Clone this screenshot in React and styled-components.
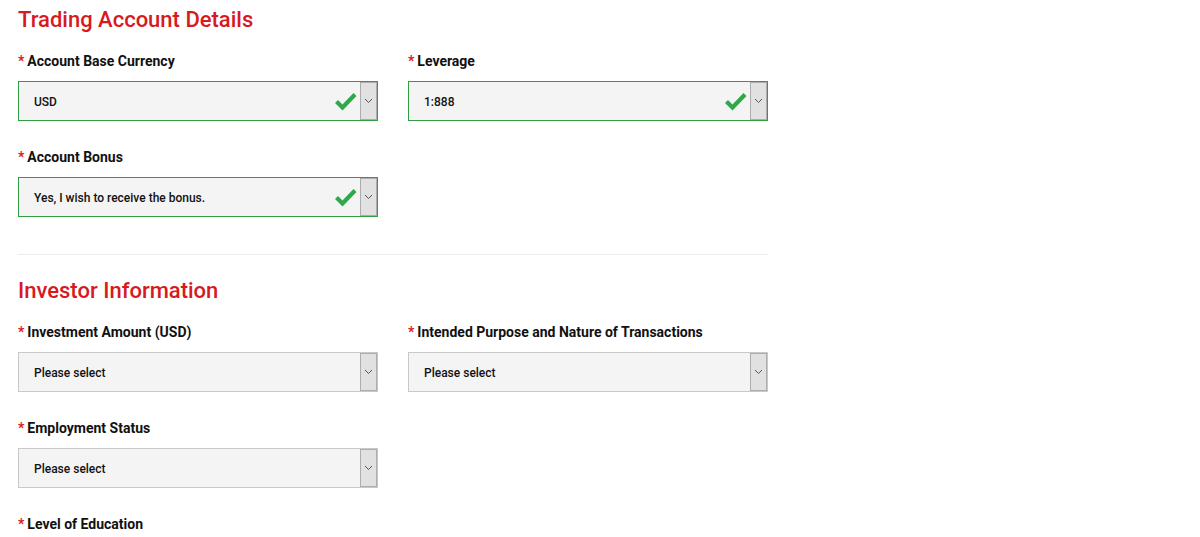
import React from 'react';
import styled, { createGlobalStyle } from 'styled-components';

const GlobalStyle = createGlobalStyle`
  body {
    margin: 0;
    background: #fff;
    font-family: Roboto, "Liberation Sans", Arial, sans-serif;
    color: #111;
  }
`;

const Page = styled.div`
  padding: 7px 18px 0;
  width: 750px;
`;

const Heading = styled.h2`
  margin: 0 0 18px;
  font-size: 22px;
  line-height: 26px;
  font-weight: 500;
  color: #d71a22;
`;

const Grid = styled.div`
  display: grid;
  grid-template-columns: 360px 360px;
  column-gap: 30px;
`;

const Field = styled.div`
  margin-bottom: 26px;
`;

const Label = styled.div`
  font-size: 14px;
  line-height: 20px;
  font-weight: 700;
  margin-bottom: 10px;
  color: #111;

  span {
    color: #d71a22;
    margin-right: 3px;
  }
`;

const Box = styled.div`
  display: flex;
  align-items: stretch;
  height: 40px;
  box-sizing: border-box;
  background: #f4f4f4;
  border: 1px solid ${(p) => (p.$valid ? '#2ea043' : '#c8c8c8')};
`;

const Value = styled.div`
  flex: 1;
  display: flex;
  align-items: center;
  padding: 2px 0 0 15px;
  font-size: 12px;
  font-weight: 500;
  color: #111;
`;

const Check = styled.svg`
  align-self: center;
  margin-right: 3px;
`;

const Arrow = styled.div`
  width: 17px;
  box-sizing: border-box;
  background: #e1e1e1;
  border: 1px solid #adadad;
  display: flex;
  align-items: center;
  justify-content: center;
`;

const Divider = styled.hr`
  border: 0;
  border-top: 1px solid #ececec;
  margin: 11px 0 23px;
`;

const Select = ({ value, valid }) => (
  <Box $valid={valid}>
    <Value>{value}</Value>
    {valid && (
      <Check width="22" height="20" viewBox="0 0 22 20">
        <path d="M1.5 10.5 L7.5 16.5 L20 3.5" fill="none" stroke="#2ea84a" strokeWidth="4.2" />
      </Check>
    )}
    <Arrow>
      <svg width="9" height="6" viewBox="0 0 9 6">
        <path d="M1 1 L4.5 4.5 L8 1" fill="none" stroke="#555" strokeWidth="1" />
      </svg>
    </Arrow>
  </Box>
);

const FormField = ({ label, value = 'Please select', valid }) => (
  <Field>
    <Label>
      <span>*</span>
      {label}
    </Label>
    {value !== null && <Select value={value} valid={valid} />}
  </Field>
);

const App = () => (
  <>
    <GlobalStyle />
    <Page>
      <Heading>Trading Account Details</Heading>
      <Grid>
        <FormField label="Account Base Currency" value="USD" valid />
        <FormField label="Leverage" value="1:888" valid />
        <FormField label="Account Bonus" value="Yes, I wish to receive the bonus." valid />
      </Grid>
      <Divider />
      <Heading>Investor Information</Heading>
      <Grid>
        <FormField label="Investment Amount (USD)" />
        <FormField label="Intended Purpose and Nature of Transactions" />
        <FormField label="Employment Status" />
        <div />
        <FormField label="Level of Education" value={null} />
      </Grid>
    </Page>
  </>
);

export default App;
